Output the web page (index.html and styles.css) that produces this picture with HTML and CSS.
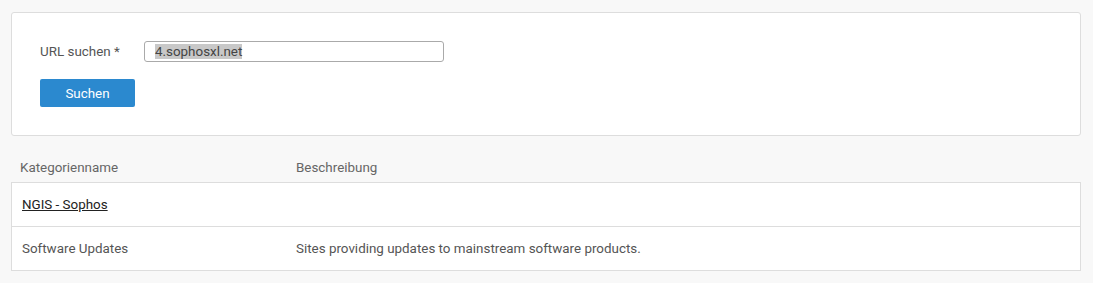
FILE: index.html
```html
<!DOCTYPE html>
<html lang="de">
<head>
  <meta charset="UTF-8">
  <meta name="viewport" content="width=device-width, initial-scale=1.0">
  <title>URL-Kategorie suchen</title>
  <link rel="stylesheet" href="styles.css">
</head>
<body>
  <div class="search-card">
    <div class="form-row">
      <label class="form-label" for="url">URL suchen *</label>
      <div class="text-input" id="url"><span class="selected">4.sophosxl.net</span></div>
    </div>
    <button class="btn-primary">Suchen</button>
  </div>

  <div class="results">
    <div class="results-head">
      <div class="col-name">Kategorienname</div>
      <div class="col-desc">Beschreibung</div>
    </div>
    <div class="results-body">
      <div class="result-row">
        <div class="col-name"><a href="#">NGIS - Sophos</a></div>
        <div class="col-desc"></div>
      </div>
      <div class="result-row">
        <div class="col-name">Software Updates</div>
        <div class="col-desc">Sites providing updates to mainstream software products.</div>
      </div>
    </div>
  </div>
</body>
</html>
```

FILE: styles.css
```css
/* General Styles */
body {
  margin: 0;
  padding: 12px 12px 0 11px;
  font-family: 'Roboto', 'Liberation Sans', sans-serif;
  font-size: 13.4px;
  color: #555;
  background-color: #f8f8f8;
}

.search-card {
  background-color: #fff;
  border: 1px solid #ddd;
  border-radius: 3px;
  padding: 28px 28px 28px;
}

.form-row {
  display: flex;
  align-items: center;
  height: 21px;
}

.form-label {
  width: 104px;
  color: #555;
}

.text-input {
  box-sizing: border-box;
  width: 300px;
  height: 21px;
  border: 1px solid #aaa;
  border-radius: 3px;
  padding: 0 0 0 10px;
  line-height: 19px;
  color: #444;
}

.text-input .selected {
  background-color: #c8c8c8;
}

.btn-primary {
  display: block;
  margin-top: 17px;
  width: 95px;
  height: 28px;
  border: none;
  border-radius: 2px;
  background-color: #2b89cf;
  color: #fff;
  font-family: inherit;
  font-size: 13.4px;
  cursor: pointer;
}

/* Results table */
.results-head {
  display: flex;
  padding: 24px 0 6px 9px;
  line-height: 16px;
  color: #666;
}

.results-head .col-name {
  width: 276px;
}

.results-body {
  background-color: #fff;
  border: 1px solid #ddd;
}

.result-row {
  display: flex;
  align-items: center;
  height: 43px;
  padding-left: 10px;
}

.result-row + .result-row {
  border-top: 1px solid #ddd;
}

.result-row .col-name {
  width: 274px;
}

.result-row a {
  color: #222;
  text-decoration: underline;
}
```
